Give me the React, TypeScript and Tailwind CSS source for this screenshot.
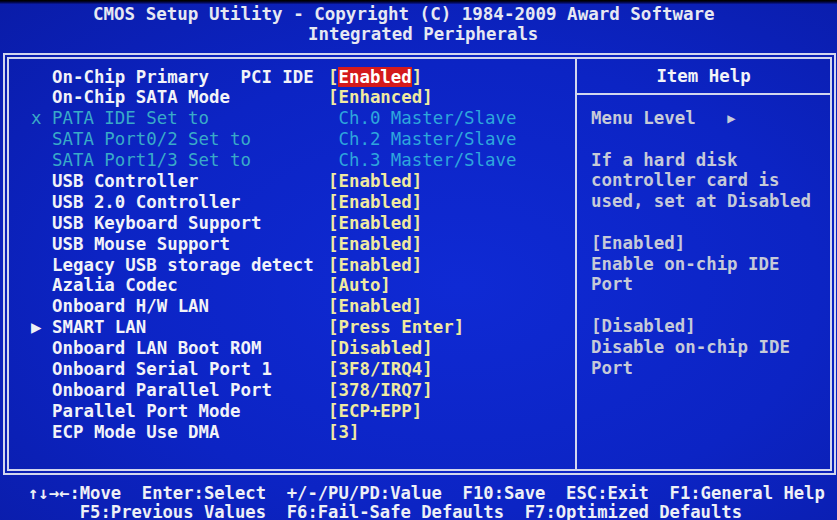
import React from "react";

type Row = { m?: string; l: string; v: string; kind?: "hl" | "dis" | "norm" };

const rows: Row[] = [
  { l: "On-Chip Primary   PCI IDE", v: "Enabled", kind: "hl" },
  { l: "On-Chip SATA Mode", v: "[Enhanced]" },
  { m: "x", l: "PATA IDE Set to", v: " Ch.0 Master/Slave", kind: "dis" },
  { l: "SATA Port0/2 Set to", v: " Ch.2 Master/Slave", kind: "dis" },
  { l: "SATA Port1/3 Set to", v: " Ch.3 Master/Slave", kind: "dis" },
  { l: "USB Controller", v: "[Enabled]" },
  { l: "USB 2.0 Controller", v: "[Enabled]" },
  { l: "USB Keyboard Support", v: "[Enabled]" },
  { l: "USB Mouse Support", v: "[Enabled]" },
  { l: "Legacy USB storage detect", v: "[Enabled]" },
  { l: "Azalia Codec", v: "[Auto]" },
  { l: "Onboard H/W LAN", v: "[Enabled]" },
  { m: "▶", l: "SMART LAN", v: "[Press Enter]" },
  { l: "Onboard LAN Boot ROM", v: "[Disabled]" },
  { l: "Onboard Serial Port 1", v: "[3F8/IRQ4]" },
  { l: "Onboard Parallel Port", v: "[378/IRQ7]" },
  { l: "Parallel Port Mode", v: "[ECP+EPP]" },
  { l: "ECP Mode Use DMA", v: "[3]" },
];

const help: string[] = [
  "MENU",
  "",
  "If a hard disk",
  "controller card is",
  "used, set at Disabled",
  "",
  "[Enabled]",
  "Enable on-chip IDE",
  "Port",
  "",
  "[Disabled]",
  "Disable on-chip IDE",
  "Port",
];

export default function App() {
  return (
    <div
      className="w-[837px] h-[520px] overflow-hidden flex flex-col bg-[radial-gradient(ellipse_at_55%_55%,#0f2ad4_0%,#0c24c4_55%,#0a1ca8_100%)] text-[17.4px] font-bold whitespace-pre"
      style={{ fontFamily: '"DejaVu Sans Mono", "Liberation Mono", monospace' }}
    >
      <div className="h-[4px] shrink-0 bg-linear-to-b from-black to-[#0a1a9c]" />
      <div className="shrink-0 leading-[20px] text-[#e6e8f2]">
        <div className="pl-[93px] text-[17.5px]">CMOS Setup Utility - Copyright (C) 1984-2009 Award Software</div>
        <div className="pl-[308px]">Integrated Peripherals</div>
      </div>
      <div className="shrink-0 mt-[9px] ml-[3px] mr-[1px] h-[422px] border-[6px] border-double border-[#d2d6ee] flex">
        <div className="w-[566px] pt-[7.5px] pl-[22px] leading-[20.9px]">
          {rows.map((r, i) => {
            const dis = r.kind === "dis";
            return (
              <div key={i} className="flex h-[20.9px]">
                <div className={`w-[21px] ${dis ? "text-[#3aa9c6] font-normal" : "text-[#eef0f6]"}`}>{r.m ?? ""}</div>
                <div className={`w-[276px] ${dis ? "text-[#39aac8] font-normal" : "text-[#f2f3f8]"}`}>{r.l}</div>
                <div className={dis ? "text-[#2ea6dc] font-normal" : "text-[#f0eaa0]"}>
                  {r.kind === "hl" ? (
                    <>
                      [<span className="inline-block bg-[#d41a1c] text-white leading-[20.9px] h-[20.9px]">{r.v}</span>]
                    </>
                  ) : (
                    r.v
                  )}
                </div>
              </div>
            );
          })}
        </div>
        <div className="flex-1 border-l-2 border-[#d2d6ee] flex flex-col">
          <div className="h-[36px] flex items-center justify-center text-[#f2f3f8] border-b-2 border-[#d2d6ee]">Item Help</div>
          <div className="pt-[13px] pl-[14px] leading-[20.8px] text-[#c6cad8]">
            {help.map((h, i) =>
              h === "MENU" ? (
                <div key={i} className="h-[20.8px] flex items-center">
                  <span>Menu Level   </span>
                  <span className="text-[14px] leading-none">▶</span>
                </div>
              ) : (
                <div key={i} className="h-[20.8px]">{h}</div>
              )
            )}
          </div>
        </div>
      </div>
      <div className="shrink-0 mt-[8.5px] pl-[28px] leading-[19px] text-[17.2px] text-[#eef0f6]">
        <div>↑↓→←:Move  Enter:Select  +/-/PU/PD:Value  F10:Save  ESC:Exit  F1:General Help</div>
        <div>     F5:Previous Values  F6:Fail-Safe Defaults  F7:Optimized Defaults</div>
      </div>
    </div>
  );
}
